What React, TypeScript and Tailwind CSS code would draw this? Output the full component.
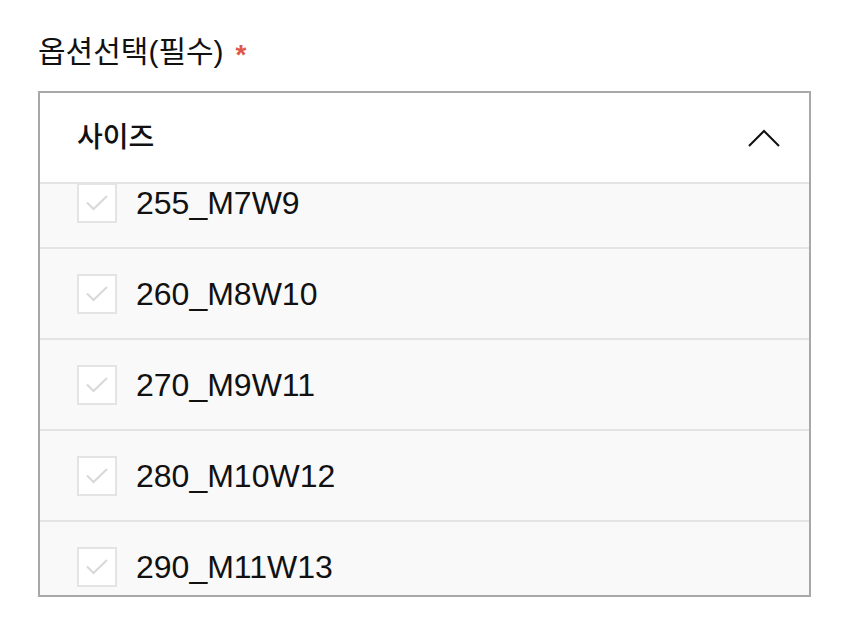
const sizes = ["255_M7W9", "260_M8W10", "270_M9W11", "280_M10W12", "290_M11W13"];

function CheckBox() {
  return (
    <div className="flex h-[40px] w-[40px] shrink-0 items-center justify-center border-2 border-[#e4e4e4] bg-white">
      <svg width="24" height="18" viewBox="0 0 24 18" fill="none">
        <polyline points="2,8.5 8.5,15 22,2" stroke="#d8d8d8" strokeWidth="2" />
      </svg>
    </div>
  );
}

export default function App() {
  return (
    <div className="min-h-[627px] bg-white px-[38px] pt-[32px] font-['Liberation_Sans','Noto_Sans_CJK_KR',sans-serif] text-[#111]">
      <div className="mb-[19px] flex h-[40px] items-center text-[30px] leading-[40px]">
        옵션선택(필수)
        <span className="ml-[12px] mt-[6px] text-[28px] font-bold text-[#e0574a]">*</span>
      </div>

      <div className="w-[773px] border-2 border-[#a8a8a8]">
        {/* header */}
        <div className="flex h-[91px] items-center justify-between border-b-2 border-[#e4e4e4] bg-white pl-[37px] pr-[29px]">
          <span className="text-[28px] font-medium">사이즈</span>
          <svg width="32" height="18" viewBox="0 0 32 18" fill="none">
            <polyline points="1,17 16,2 31,17" stroke="#111" strokeWidth="2" />
          </svg>
        </div>

        {/* option list, scrolled a little */}
        <div className="h-[411px] overflow-hidden bg-[#f9f9f9]">
          <div className="-mt-[26px]">
            {sizes.map((s) => (
              <div
                key={s}
                className="flex h-[91px] items-center gap-[19px] border-b-2 border-[#e4e4e4] pl-[37px]"
              >
                <CheckBox />
                <span className="text-[32px] leading-none">{s}</span>
              </div>
            ))}
          </div>
        </div>
      </div>
    </div>
  );
}
